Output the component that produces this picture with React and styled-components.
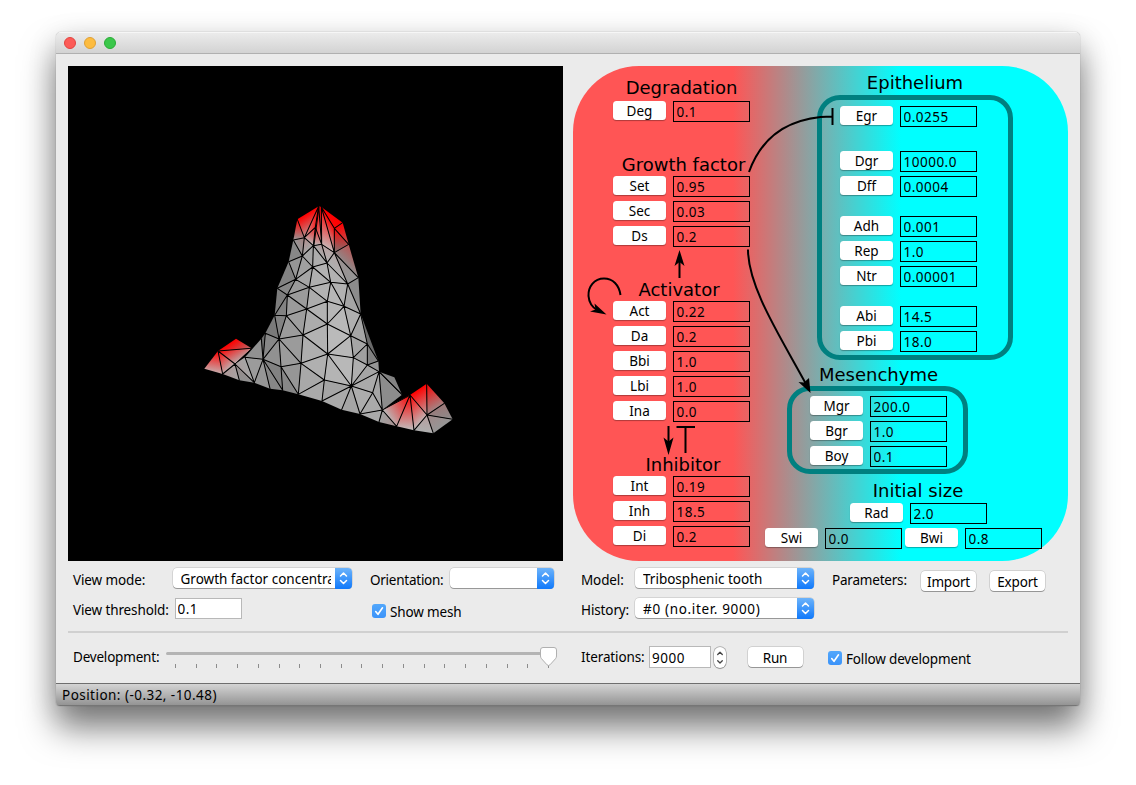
import React from "react";
import styled, { createGlobalStyle } from "styled-components";

const GlobalStyle = createGlobalStyle`
  * { box-sizing: border-box; }
  html, body { margin: 0; padding: 0; background: #fff; }
  body { overflow: hidden; }
  button, input { font: inherit; color: inherit; }
`;

const uiFont = `"Noto Sans", "Open Sans", sans-serif`;

const Desktop = styled.div`
  width: 1136px;
  height: 785px;
  padding: 32px 56px 0;
  background: #fff;
  overflow: hidden;
  font-family: ${uiFont};
  font-size: 13.5px;
  color: #000;
`;

const Window = styled.div`
  width: 1024px;
  height: 674px;
  display: flex;
  flex-direction: column;
  background: #ebebeb;
  border-radius: 5px 5px 4px 4px;
  box-shadow: 0 0 1px rgba(0, 0, 0, 0.45), 0 22px 34px rgba(0, 0, 0, 0.5),
    0 6px 30px rgba(0, 0, 0, 0.12);
  overflow: hidden;
`;

const TitleBar = styled.div`
  height: 22px;
  flex: none;
  display: flex;
  align-items: center;
  gap: 8px;
  padding-left: 8px;
  background: linear-gradient(#ebebeb, #d3d3d3);
  border-top: 1px solid #f6f6f6;
  border-bottom: 1px solid #b0b0b0;
`;

const Light = styled.span`
  width: 12px;
  height: 12px;
  border-radius: 50%;
  background: ${(p) => p.$fill};
  border: 1px solid ${(p) => p.$edge};
`;

const Body = styled.div`
  flex: 1;
  padding: 12px 12px 0;
`;

const Columns = styled.div`
  display: grid;
  grid-template-columns: 495px 495px;
  column-gap: 10px;
`;

const Viewport = styled.div`
  height: 495px;
  background: #000;
  svg { display: block; }
`;

const Diagram = styled.div`
  position: relative;
  height: 495px;
  border-radius: 66px;
  background: linear-gradient(90deg, #ff5555 160px, #00ffff 328px);
`;

const Arrows = styled.svg`
  position: absolute;
  inset: 0;
  pointer-events: none;
`;

const Region = styled.div`
  position: absolute;
  left: ${(p) => p.$x}px;
  top: ${(p) => p.$y}px;
  width: ${(p) => p.$w}px;
  height: ${(p) => p.$h}px;
  border: 5px solid #008080;
  border-radius: 23px;
`;

const Heading = styled.div`
  position: absolute;
  left: ${(p) => p.$x}px;
  top: ${(p) => p.$y}px;
  width: 160px;
  text-align: center;
  white-space: nowrap;
  font: 18px/22px "DejaVu Sans", sans-serif;
`;

const Group = styled.div`
  position: absolute;
  left: ${(p) => p.$x}px;
  top: ${(p) => p.$y}px;
  display: flex;
  flex-direction: column;
  gap: 4px;
`;

const ParamRow = styled.div`
  display: flex;
  align-items: flex-start;
  gap: 7px;
  height: 21px;
`;

const ParamButton = styled.button`
  width: 53px;
  height: 19px;
  padding: 1px 0 0;
  border: 0;
  border-radius: 3.5px;
  background: #fff;
  box-shadow: 0 1px 1px rgba(0, 0, 0, 0.32);
  font-size: 13.5px;
  line-height: 18px;
  text-align: center;
`;

const ParamValue = styled.input`
  width: 77px;
  height: 21px;
  padding: 1px 0 0 2.5px;
  border: 1px solid #000;
  border-radius: 0;
  background: transparent;
  font-size: 13.5px;
  letter-spacing: 0.5px;
  outline: 0;
`;

const Row = styled.div`
  display: flex;
  align-items: flex-start;
  height: 23px;
  margin-top: ${(p) => p.$top}px;
  padding-left: ${(p) => p.$inset || 0}px;
`;

const Label = styled.label`
  width: ${(p) => p.$w}px;
  flex: none;
  margin-left: ${(p) => p.$left || 0}px;
  padding-top: ${(p) => (p.$drop === undefined ? 2 : p.$drop)}px;
  line-height: 20px;
  white-space: nowrap;
  letter-spacing: ${(p) => (p.$track === undefined ? -0.12 : p.$track)}px;
`;

const Combo = styled.div`
  width: ${(p) => p.$w}px;
  height: 20px;
  flex: none;
  display: flex;
  border-radius: 4px;
  background: #fff;
  box-shadow: 0 0 0 0.5px rgba(0, 0, 0, 0.2), 0 1px 0.5px rgba(0, 0, 0, 0.28);
`;

const ComboText = styled.span`
  flex: 1;
  overflow: hidden;
  white-space: nowrap;
  margin: 0 4px 0 8px;
  line-height: 22px;
  letter-spacing: ${(p) => p.$track || 0}px;
`;

const ComboKnob = styled.span`
  width: 17px;
  height: 21px;
  flex: none;
  border-radius: 0 4px 4px 0;
  background: linear-gradient(#6cb3fa, #1079fb);
  svg { display: block; }
`;

const Field = styled.input`
  width: ${(p) => p.$w}px;
  height: ${(p) => p.$h || 21}px;
  flex: none;
  margin-left: ${(p) => p.$left || 0}px;
  padding: ${(p) => p.$drop || 0}px 0 0 ${(p) => p.$inset || 1.5}px;
  border: 1px solid #b8b8b8;
  border-radius: 0;
  background: #fff;
  letter-spacing: 0.5px;
  outline: 0;
`;

const PushButton = styled.button`
  width: 55px;
  height: 20px;
  flex: none;
  margin: ${(p) => p.$top}px 0 0 ${(p) => p.$left}px;
  padding: 0;
  border: 0;
  border-radius: 4px;
  background: #fff;
  box-shadow: 0 0 0 0.5px rgba(0, 0, 0, 0.22), 0 1px 0.5px rgba(0, 0, 0, 0.28);
  line-height: 22px;
  letter-spacing: -0.2px;
`;

const CheckBox = styled.span`
  width: 14px;
  height: 14px;
  flex: none;
  margin: ${(p) => p.$top}px 4px 0 ${(p) => p.$left}px;
  border-radius: 3px;
  background: linear-gradient(#52a7fb, #3b93f9);
  svg { display: block; }
`;

const Stepper = styled.span`
  width: 12px;
  height: 21px;
  flex: none;
  margin: 1px 0 0 3px;
  border-radius: 6px;
  background: #fff;
  box-shadow: 0 0 0 0.7px rgba(0, 0, 0, 0.3), 0 1px 1px rgba(0, 0, 0, 0.2);
  svg { display: block; }
`;

const Divider = styled.div`
  height: 2px;
  margin-top: 10px;
  background: #d0d0d0;
`;

const StatusBar = styled.div`
  height: 23px;
  flex: none;
  padding-left: 6px;
  border-top: 1px solid #6e6e6e;
  border-bottom: 1px solid #767676;
  background: linear-gradient(#d4d4d4, #949494);
  line-height: 23px;
  letter-spacing: 0.46px;
`;

/* Mesh vertices: x, y, growth factor concentration */
const V = {
  P: [386, 49, 1], Q: [394, 51, 1], A: [322, 88, 1], B: [458, 98, 1], K: [433, 115, 0.95],
  C: [476, 163, 0.4], D: [505, 263, 0], E: [512, 372, 0], G: [565, 513, 0],
  L1: [310, 150, 0], L2: [296, 215, 0], L3: [262, 295, 0], L4: [254, 376, 0], L5: [226, 430, 0], L6: [214, 446, 0],
  a1: [343, 143, 0.15], a2: [376, 112, 0.8], a3: [370, 167, 0], a4: [395, 163, 0.1], a5: [433, 188, 0.05],
  b1: [337, 198, 0], b2: [368, 231, 0], b3: [411, 219, 0],
  c1: [317, 268, 0], c2: [358, 292, 0], c3: [422, 277, 0], c4: [473, 282, 0],
  d1: [292, 315, 0], d2: [350, 357, 0], d3: [412, 334, 0], d4: [462, 349, 0],
  e1: [289, 377, 0], e2: [339, 435, 0], e3: [412, 402, 0], e4: [482, 437, 0],
  f1: [267, 447, 0], f2: [333, 520, 0], f3: [413, 492, 0], f4: [490, 503, 0], f5: [532, 462, 0],
  g0: [219, 508, 0], g1: [273, 530, 0], g2: [403, 570, 0], g3: [484, 588, 0], g4: [532, 525, 0], g5: [567, 545, 0],
  s: [43, 536, 0.2], s1: [98, 552, 0.1], s2: [148, 571, 0], s3: [193, 578, 0], s4: [240, 596, 0],
  s5: [278, 601, 0], s6: [325, 613, 0], s7: [396, 633, 0], s8: [455, 659, 0], s9: [510, 672, 0],
  s10: [567, 696, 0], s11: [620, 709, 0.1], s12: [672, 721, 0], s13: [730, 730, 0], t: [788, 688, 0],
  k1: [548, 608, 0], k2: [577, 660, 0], k3: [636, 614, 0], k4: [613, 562, 0],
  r1: [660, 615, 1], r2: [710, 581, 1], r3: [763, 640, 0.15], r4: [711, 675, 0.1],
  q1: [84, 483, 1], q2: [138, 446, 1], q3: [185, 475, 0.3], q4: [135, 522, 0.05], q5: [165, 502, 0],
};

const FACES = `
L1 A a1 150|A P a1 170|a1 P a2 190|a1 a2 a3 185|a2 P a4 190|a2 a3 a4 185|P Q a4 120|Q a4 a5 195|Q K a5 180|Q B K 180|K B C 140|K C a5 120
L1 a1 b1 150|a1 a3 b1 165|L1 b1 L2 135|b1 a3 b2 165|a3 a4 b3 170|a3 b3 b2 172|a4 a5 b3 178
L2 b1 c1 150|b1 b2 c1 160|L2 c1 L3 130|c1 b2 c2 165|b2 b3 c3 178|b2 c3 c2 175|b3 a5 c4 175|b3 c4 c3 178|a5 C D 140|a5 D c4 150
L3 c1 d1 135|c1 c2 d1 155|L3 d1 L4 125|d1 c2 d2 155|c2 c3 d3 178|c2 d3 d2 172|c3 c4 d4 178|c3 d4 d3 182|c4 D E 140|c4 E d4 165
d1 e1 L4 130|d1 d2 e1 155|d2 d3 e3 178|d2 e3 e2 172|e1 d2 e2 158|d3 d4 e3 182|d4 E e4 175|d4 e4 e3 184
L4 e1 f1 130|e1 e2 f1 155|L4 f1 L5 122|e2 e3 f3 178|e2 f3 f2 174|f1 e2 f2 155|e3 e4 f3 186|e4 f4 f3 184|e4 E f5 165|e4 f5 f4 165|E G f5 105
L5 f1 g0 135|f1 f2 g1 155|f1 g1 g0 145|f2 f3 g2 176|f3 g3 g2 180|f3 f4 g3 184|f4 g4 g3 174|f4 f5 g4 160|f5 G g4 130|g4 G g5 150|g4 g5 g3 165
L5 g0 L6 110|L6 g0 q5 145|q5 g0 s3 155|q5 s3 q4 165|q4 s2 s3 145|q4 s1 s2 165|g0 s3 s4 150|g0 s4 s5 135|g0 g1 s5 130|g1 s6 s5 135|g1 f2 s6 150
f2 g2 s6 168|s6 g2 s7 170|g2 g3 s7 165|g3 s8 s7 170|g3 s9 s8 165|g3 k1 s9 172|g3 g5 k1 170|k1 k2 s9 170|g5 k2 k1 165|k2 s10 s9 170|g5 k3 k2 140|g5 k4 k3 130
k2 s11 s10 160|k2 r1 s11 185|r1 s12 s11 190|r1 r4 s12 190|r1 r2 r4 180|r2 r3 r4 150|r3 t r4 140|r4 t s13 150|r4 s13 s12 175
q1 q2 q3 150|q1 q3 q4 180|q1 q4 s1 185|q1 s1 s 190`
  .trim()
  .split(/[|\n]/)
  .map((f) => f.trim().split(" "));

const mix = (shade, r) => {
  const k = Math.max(0, Math.min(1, r));
  const c = Math.round(shade * (1 - k));
  return `rgb(${Math.round(shade + (255 - shade) * k)},${c},${c})`;
};

/* Linear interpolation of the concentration over one face */
function faceGradient([a, b, c], shade, id) {
  const det = (b[0] - a[0]) * (c[1] - a[1]) - (c[0] - a[0]) * (b[1] - a[1]);
  const gx = ((b[2] - a[2]) * (c[1] - a[1]) - (c[2] - a[2]) * (b[1] - a[1])) / det;
  const gy = ((c[2] - a[2]) * (b[0] - a[0]) - (b[2] - a[2]) * (c[0] - a[0])) / det;
  const g2 = gx * gx + gy * gy;
  const at = (r) => [a[0] + (gx * (r - a[2])) / g2, a[1] + (gy * (r - a[2])) / g2];
  const lo = Math.min(a[2], b[2], c[2]);
  const hi = Math.max(a[2], b[2], c[2]);
  const [x1, y1] = at(lo);
  const [x2, y2] = at(hi);
  return (
    <linearGradient key={id} id={id} gradientUnits="userSpaceOnUse" x1={x1} y1={y1} x2={x2} y2={y2}>
      <stop offset="0" stopColor={mix(shade, lo)} />
      <stop offset="1" stopColor={mix(shade, hi)} />
    </linearGradient>
  );
}

/* Edges shared by two faces; the silhouette stays unstroked */
const EDGES = (() => {
  const count = {};
  FACES.forEach(([i, j, k]) => {
    [[i, j], [j, k], [k, i]].forEach((e) => {
      const key = e.sort().join(" ");
      count[key] = (count[key] || 0) + 1;
    });
  });
  return Object.keys(count)
    .filter((key) => count[key] > 1)
    .map((key) => {
      const [a, b] = key.split(" ").map((n) => V[n]);
      return `M${a[0]} ${a[1]}L${b[0]} ${b[1]}`;
    })
    .join("");
})();

function Mesh() {
  const defs = [];
  const faces = FACES.map(([i, j, k, tone], n) => {
    const pts = [V[i], V[j], V[k]];
    const shade = Number(tone);
    const flat = pts[0][2] === pts[1][2] && pts[1][2] === pts[2][2];
    const id = `face${n}`;
    if (!flat) defs.push(faceGradient(pts, shade, id));
    return (
      <polygon
        key={id}
        points={pts.map((p) => `${p[0]},${p[1]}`).join(" ")}
        fill={flat ? mix(shade, pts[0][2]) : `url(#${id})`}
      />
    );
  });
  return (
    <svg width="495" height="495" viewBox="0 0 495 495">
      <defs>{defs}</defs>
      <g transform="translate(122 124) scale(0.33333)">
        {faces}
        <path d={EDGES} fill="none" stroke="#000" strokeWidth="3.1" strokeLinecap="round" />
        <path
          d="M387 50L372 165M577 660L660 616M135 522L184 477M567 545L632 610"
          fill="none"
          stroke="#000"
          strokeWidth="3"
        />
      </g>
    </svg>
  );
}

const GROUPS = [
  { x: 40, y: 35, rows: [["Deg", "0.1"]] },
  { x: 40, y: 110, rows: [["Set", "0.95"], ["Sec", "0.03"], ["Ds", "0.2"]] },
  { x: 40, y: 235, rows: [["Act", "0.22"], ["Da", "0.2"], ["Bbi", "1.0"], ["Lbi", "1.0"], ["Ina", "0.0"]] },
  { x: 40, y: 410, rows: [["Int", "0.19"], ["Inh", "18.5"], ["Di", "0.2"]] },
  { x: 267, y: 40, rows: [["Egr", "0.0255"]] },
  { x: 267, y: 85, rows: [["Dgr", "10000.0"], ["Dff", "0.0004"]] },
  { x: 267, y: 150, rows: [["Adh", "0.001"], ["Rep", "1.0"], ["Ntr", "0.00001"]] },
  { x: 267, y: 240, rows: [["Abi", "14.5"], ["Pbi", "18.0"]] },
  { x: 237, y: 330, rows: [["Mgr", "200.0"], ["Bgr", "1.0"], ["Boy", "0.1"]] },
  { x: 277, y: 437, rows: [["Rad", "2.0"]] },
  { x: 192, y: 462, rows: [["Swi", "0.0"]] },
  { x: 332, y: 462, rows: [["Bwi", "0.8"]] },
];

const HEADINGS = [
  ["Degradation", 28.5, 11],
  ["Growth factor", 30.5, 88],
  ["Activator", 26, 213],
  ["Inhibitor", 30, 388],
  ["Epithelium", 262, 6],
  ["Mesenchyme", 225.5, 298],
  ["Initial size", 265, 414],
];

const Connections = () => (
  <Arrows width="495" height="495" viewBox="573 66 495 495" fill="none" stroke="#000" strokeWidth="2">
    <path d="M749 172C762 136 789 117 832 116.500M832.500 108V125" />
    <path d="M748 249.500C748 287 780 336 806 384" />
    <path d="M810.500 393L798.500 382L804 382.500L809 378Z" fill="#000" stroke="none" />
    <path d="M679.500 278V260" />
    <path d="M679.500 250L684.500 266L679.500 262L674.500 266Z" fill="#000" stroke="none" />
    <path d="M620.500 295C619 285 613 278.500 604 278.500C594 278.500 588 287 588.500 296C589 302 592 307 597 310" />
    <path d="M606.500 314.500L590 311.500L595.500 309.500L594.500 303.500Z" fill="#000" stroke="none" />
    <path d="M668.500 426V444" />
    <path d="M668.500 455L663.500 437.500L668.500 441.500L673.500 437.500Z" fill="#000" stroke="none" />
    <path d="M676.500 427H695M685.500 427V453" />
  </Arrows>
);

const Select = ({ w, children, track }) => (
  <Combo $w={w}>
    <ComboText $track={track}>{children}</ComboText>
    <ComboKnob>
      <svg width="17" height="21" fill="none" stroke="#fff" strokeWidth="1.5" strokeLinecap="round" strokeLinejoin="round">
        <path d="M5.500 8L8.500 5L11.500 8M5.500 12.500L8.500 15.500L11.500 12.500" />
      </svg>
    </ComboKnob>
  </Combo>
);

const Check = (props) => (
  <CheckBox {...props}>
    <svg width="14" height="14" fill="none" stroke="#fff" strokeWidth="1.6" strokeLinecap="round" strokeLinejoin="round">
      <path d="M3.700 7.500L6 10.300L10.500 3.800" />
    </svg>
  </CheckBox>
);

const Slider = () => (
  <svg width="392" height="24" viewBox="166 646 392 24">
    <rect x="166" y="652" width="391" height="3" rx="1.500" fill="#b4b4b4" />
    {Array.from({ length: 19 }, (_, i) => (
      <rect key={i} x={Math.round(175 + i * 20.72)} y="664" width="1" height="4" fill="#8c8c8c" />
    ))}
    <path
      d="M543 647.500H554Q556.500 647.500 556.500 650V656Q556.500 657.500 555.500 658.700L550 664.800Q548.500 666.300 547 664.800L541.500 658.700Q540.500 657.500 540.500 656V650Q540.500 647.500 543 647.500Z"
      fill="#fff"
      stroke="#b0b0b0"
      strokeWidth="1"
    />
  </svg>
);

export default function App() {
  return (
    <Desktop>
      <GlobalStyle />
      <Window>
        <TitleBar>
          <Light $fill="#fc5b57" $edge="#e2443f" />
          <Light $fill="#fdbc40" $edge="#dfa035" />
          <Light $fill="#3bc74b" $edge="#2aac36" />
        </TitleBar>
        <Body>
          <Columns>
            <Viewport>
              <Mesh />
            </Viewport>
            <Diagram>
              <Region $x={244} $y={29} $w={196} $h={265} />
              <Region $x={214} $y={320} $w={181} $h={88} />
              {HEADINGS.map(([text, x, y]) => (
                <Heading key={text} $x={x} $y={y}>{text}</Heading>
              ))}
              {GROUPS.map((g) => (
                <Group key={g.rows[0][0]} $x={g.x} $y={g.y}>
                  {g.rows.map(([name, value]) => (
                    <ParamRow key={name}>
                      <ParamButton>{name}</ParamButton>
                      <ParamValue defaultValue={value} />
                    </ParamRow>
                  ))}
                </Group>
              ))}
              <Connections />
            </Diagram>
          </Columns>
          <Columns>
            <div>
              <Row $top={7} $inset={5}>
                <Label $w={99.5}>View mode:</Label>
                <Select w={179}>Growth factor concentration</Select>
                <Label $left={18.5} $w={80} $track={-0.25}>Orientation:</Label>
                <Select w={104} />
              </Row>
              <Row $top={7} $inset={5}>
                <Label $w={102}>View threshold:</Label>
                <Field $w={67} defaultValue="0.1" />
                <Check $left={130} $top={6} />
                <Label $drop={4} $track={-0.15}>Show mesh</Label>
              </Row>
            </div>
            <div>
              <Row $top={7} $inset={8}>
                <Label $w={54}>Model:</Label>
                <Select w={179}>Tribosphenic tooth</Select>
                <Label $left={18} $w={89} $track={-0.2}>Parameters:</Label>
                <PushButton $top={3} $left={0}>Import</PushButton>
                <PushButton $top={3} $left={14}>Export</PushButton>
              </Row>
              <Row $top={7} $inset={8}>
                <Label $w={54}>History:</Label>
                <Select w={179} track={0.66}>#0 (no.iter. 9000)</Select>
              </Row>
            </div>
          </Columns>
          <Divider />
          <Columns>
            <Row $top={13} $inset={5}>
              <Label $w={93} $drop={1} $track={-0.2}>Development:</Label>
              <Slider />
            </Row>
            <Row $top={13} $inset={8}>
              <Label $w={68} $drop={1}>Iterations:</Label>
              <Field $w={62} $h={22} $inset={2} $drop={1} defaultValue="9000" />
              <Stepper>
                <svg width="12" height="21" fill="none" stroke="#444" strokeWidth="1.300" strokeLinecap="round" strokeLinejoin="round">
                  <path d="M3.700 7.500L6 5.200L8.300 7.500M3.700 13.700L6 16L8.300 13.700" />
                </svg>
              </Stepper>
              <PushButton $top={1} $left={21.5}>Run</PushButton>
              <Check $left={25.5} $top={5} />
              <Label $drop={3} $track={-0.16}>Follow development</Label>
            </Row>
          </Columns>
        </Body>
        <StatusBar>Position: (-0.32, -10.48)</StatusBar>
      </Window>
    </Desktop>
  );
}
